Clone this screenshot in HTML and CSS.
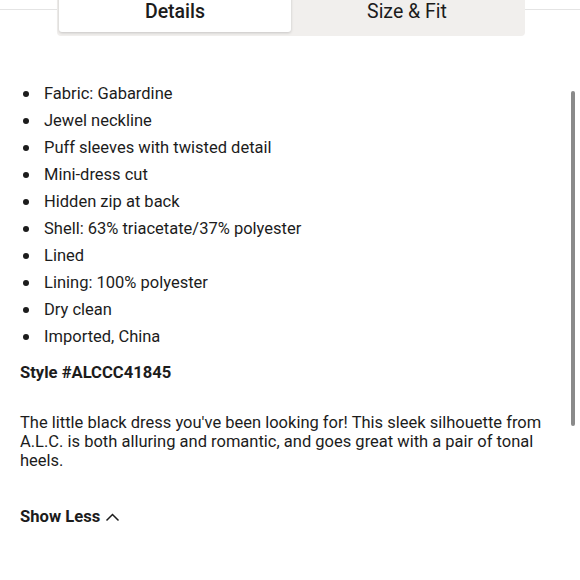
FILE: index.html
```html
<!DOCTYPE html>
<html lang="en">

<head>
  <meta charset="UTF-8" />
  <meta name="viewport" content="width=device-width, initial-scale=1.0"/>
  <title>Listing Details</title>
  <link rel="stylesheet" href="styles.css">
</head>

<body>
  <div class="main">
    <div class="tabs-row">
      <div class="tabs">
        <button class="tab active">Details</button>
        <button class="tab">Size &amp; Fit</button>
      </div>
    </div>

    <div class="details">
      <ul class="features">
        <li>Fabric: Gabardine</li>
        <li>Jewel neckline</li>
        <li>Puff sleeves with twisted detail</li>
        <li>Mini-dress cut</li>
        <li>Hidden zip at back</li>
        <li>Shell: 63% triacetate/37% polyester</li>
        <li>Lined</li>
        <li>Lining: 100% polyester</li>
        <li>Dry clean</li>
        <li>Imported, China</li>
      </ul>
      <p class="style-no">Style #ALCCC41845</p>
      <p class="desc">The little black dress you've been looking for! This sleek silhouette from A.L.C. is both alluring and romantic, and goes great with a pair of tonal heels.</p>
      <button class="show-less">Show Less
        <svg width="15" height="10" viewBox="0 0 15 10" fill="none" stroke="currentColor" stroke-width="1.5">
          <path d="M1.5 8.5 L7.5 2.5 L13.5 8.5" />
        </svg>
      </button>
    </div>
  </div>
  <div class="scrollbar"></div>
</body>

</html>
```

FILE: styles.css
```css
* {
  margin: 0;
  padding: 0;
  box-sizing: border-box;
}

:root {
  --text: #1c1c1c;
  --line: #e4e4e4;
  --tab-bg: #f1efed;
}

body {
  font-family: Roboto, 'Liberation Sans', sans-serif;
  color: var(--text);
  background: #fff;
  overflow: hidden;
}

.main {
  width: 580px;
  height: 580px;
}

.tabs-row {
  display: flex;
  align-items: flex-start;
  height: 37px;
  margin-top: -14px;
  position: relative;
}

.tabs-row::before {
  content: "";
  position: absolute;
  left: 0;
  right: 0;
  top: 23px;
  border-top: 1px solid var(--line);
}

.tabs {
  position: relative;
  display: flex;
  margin-left: 57px;
  width: 468px;
  height: 50px;
  padding: 2px 2px 4px;
  background: var(--tab-bg);
  border-radius: 4px;
}

.tab {
  flex: 1;
  border: none;
  background: transparent;
  font-family: inherit;
  font-size: 19.5px;
  color: var(--text);
  padding-top: 3px;
}

.tab.active {
  background: #fff;
  font-weight: 500;
  border-radius: 3px;
  box-shadow: 0 1px 3px rgba(0, 0, 0, 0.18);
}

.details {
  padding: 57px 20px 0;
}

.features {
  list-style: none;
}

.features li {
  position: relative;
  padding-left: 24px;
  font-size: 16.5px;
  line-height: 27px;
}

.features li::before {
  content: "";
  position: absolute;
  left: 3px;
  top: 11px;
  width: 6px;
  height: 6px;
  border-radius: 50%;
  background: var(--text);
}

.style-no {
  margin-top: 13px;
  font-size: 16.6px;
  font-weight: 700;
  line-height: 20px;
}

.desc {
  margin-top: 30px;
  font-size: 16.5px;
  line-height: 19px;
}

.show-less {
  display: flex;
  align-items: center;
  gap: 5px;
  margin-top: 37px;
  border: none;
  background: none;
  font-family: inherit;
  font-size: 16.6px;
  font-weight: 700;
  color: var(--text);
}

.scrollbar {
  position: absolute;
  left: 571px;
  top: 91px;
  width: 4px;
  height: 335px;
  border-radius: 2px;
  background: #8a8a8a;
}
```
